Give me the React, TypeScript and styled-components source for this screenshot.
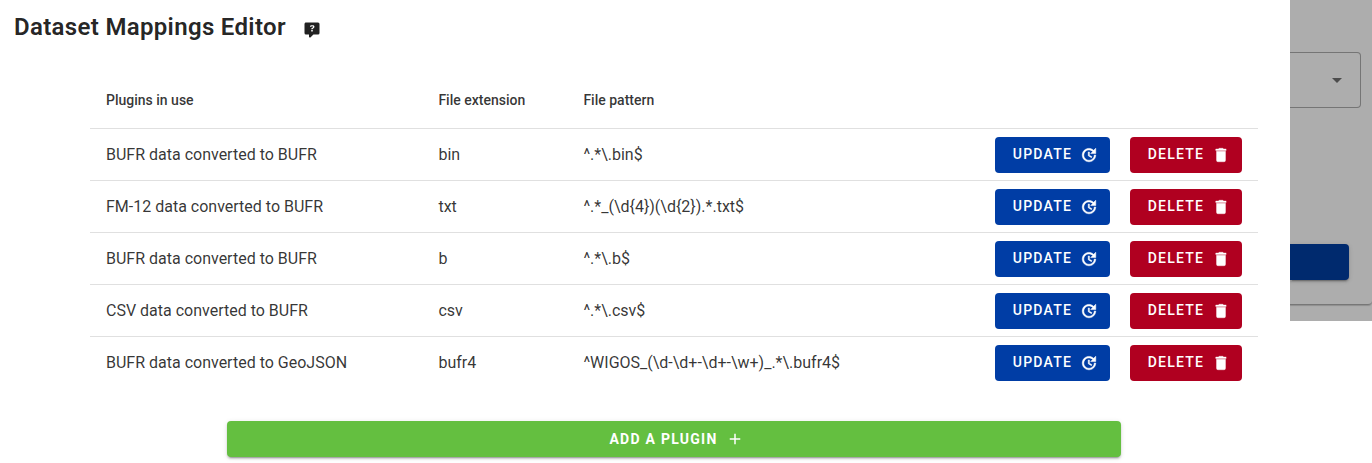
import React from "react";
import styled, { createGlobalStyle } from "styled-components";

const GlobalStyle = createGlobalStyle`
  *, *::before, *::after { box-sizing: border-box; }
  html, body { margin: 0; background: #fff; overflow: hidden; }
  body { font-family: Roboto, "Liberation Sans", sans-serif; color: rgba(0, 0, 0, 0.87); }
`;

const paths = {
  help: "M9,22A1,1 0 0,1 8,21V18H4A2,2 0 0,1 2,16V4C2,2.89 2.9,2 4,2H20A2,2 0 0,1 22,4V16A2,2 0 0,1 20,18H13.9L10.2,21.71C10,21.9 9.75,22 9.5,22H9M12.19,5.5C11.3,5.5 10.59,5.68 10.05,6.04C9.5,6.4 9.22,7 9.27,7.69H11.24C11.24,7.41 11.34,7.2 11.5,7.06C11.7,6.92 11.92,6.85 12.19,6.85C12.5,6.85 12.77,6.93 12.95,7.11C13.13,7.28 13.22,7.5 13.22,7.8C13.22,8.08 13.14,8.33 13,8.54C12.83,8.76 12.62,8.94 12.36,9.08C11.84,9.4 11.5,9.68 11.29,9.92C11.1,10.16 11,10.5 11,11H13C13,10.72 13.05,10.5 13.14,10.32C13.23,10.15 13.4,10 13.66,9.85C14.12,9.64 14.5,9.36 14.79,9C15.08,8.63 15.23,8.24 15.23,7.8C15.23,7.1 14.96,6.54 14.42,6.12C13.88,5.71 13.13,5.5 12.19,5.5M11,12V14H13V12H11Z",
  update: "M21,10.12H14.22L16.96,7.3C14.23,4.6 9.81,4.5 7.08,7.2C4.35,9.91 4.35,14.28 7.08,17C9.81,19.7 14.23,19.7 16.96,17C18.32,15.65 19,14.08 19,12.1H21C21,14.08 20.12,16.65 18.36,18.39C14.85,21.87 9.15,21.87 5.64,18.39C2.14,14.92 2.11,9.28 5.62,5.81C9.13,2.34 14.76,2.34 18.27,5.81L21,3V10.12M12.5,8V12.25L16,14.33L15.28,15.54L11,13V8H12.5Z",
  trash: "M19,4H15.5L14.5,3H9.5L8.5,4H5V6H19M6,19A2,2 0 0,0 8,21H16A2,2 0 0,0 18,19V7H6V19Z",
  plus: "M19,13H13V19H11V13H5V11H11V5H13V11H19V13Z",
  caret: "M7,10L12,15L17,10H7Z",
};

const Svg = styled.svg<{ $size: number; $stroke: number }>`
  display: block;
  flex: none;
  width: ${(p) => p.$size}px;
  height: ${(p) => p.$size}px;
  fill: currentColor;
  stroke: currentColor;
  stroke-width: ${(p) => p.$stroke};
`;

type IconProps = { name: keyof typeof paths; size?: number; stroke?: number };

const Icon = ({ name, size = 18, stroke = 0 }: IconProps) => (
  <Svg $size={size} $stroke={stroke} viewBox="0 0 24 24" aria-hidden="true">
    <path d={paths[name]} />
  </Svg>
);

const Page = styled.div`
  display: flex;
  align-items: flex-start;
  width: 1372px;
  height: 463px;
  overflow: hidden;
`;

const Dialog = styled.main`
  width: 1290px;
  height: 463px;
  flex: none;
  background: #fff;
`;

const TitleBar = styled.header`
  display: flex;
  align-items: center;
  gap: 17.5px;
  height: 54px;
  padding-left: 14px;
`;

const Title = styled.h1`
  margin: 0;
  font-size: 24px;
  line-height: 32px;
  font-weight: 600;
  letter-spacing: 0.33px;
`;

const HelpMark = styled.span`
  padding-top: 5px;
`;

const Table = styled.section`
  width: 1168px;
  margin: 18px 0 0 90px;
`;

const Row = styled.div`
  display: grid;
  grid-template-columns: 332.4px 145px 1fr auto;
  align-items: center;
  height: 52px;
  padding: 0 16px;
  border-bottom: 1px solid #e0e0e0;
  color: rgba(0, 0, 0, 0.8);
  font-size: 16px;
  font-weight: 400;

  &:last-child { border-bottom-color: transparent; }
`;

const HeadRow = styled(Row)`
  height: 57px;
  font-size: 14px;
  font-weight: 500;
`;

const Actions = styled.div`
  display: flex;
  gap: 20px;
`;

const Button = styled.button<{ $color: string; $width: number }>`
  display: flex;
  align-items: center;
  justify-content: center;
  gap: 8px;
  width: ${(p) => p.$width}px;
  height: 36px;
  padding: 0 0 0 6px;
  border: 0;
  border-radius: 4px;
  background: ${(p) => p.$color};
  color: #fff;
  font: 500 14px/20px Roboto, "Liberation Sans", sans-serif;
  letter-spacing: 1.25px;
  text-transform: uppercase;
`;

const Label = styled.span`
  padding-bottom: 1px;
`;

const AddButton = styled(Button)`
  margin: 32px 0 0 227px;
  padding-left: 5px;
  font-weight: 700;
  box-shadow: 0 3px 1px -2px rgba(0, 0, 0, 0.2), 0 2px 2px rgba(0, 0, 0, 0.14), 0 1px 5px rgba(0, 0, 0, 0.12);
`;

const Backdrop = styled.aside`
  flex: 1;
  height: 321px;
  padding-top: 52px;
  background: #adadad;
  overflow: hidden;
`;

const SelectField = styled.div`
  display: flex;
  align-items: center;
  justify-content: flex-end;
  width: 71px;
  height: 56px;
  padding-right: 11px;
  border: 1px solid #757575;
  border-left: 0;
  border-radius: 0 4px 4px 0;
  color: #4c4c4c;
`;

const SubmitBar = styled.div`
  width: 59px;
  height: 36px;
  margin-top: 136px;
  border-radius: 0 4px 4px 0;
  background: #002a6e;
  box-shadow: 0 3px 1px -2px rgba(0, 0, 0, 0.2), 0 2px 2px rgba(0, 0, 0, 0.14), 0 1px 5px rgba(0, 0, 0, 0.12);
`;

const CardEdge = styled.div`
  height: 25px;
  border-bottom: 1px solid #777;
  border-bottom-right-radius: 4px;
  box-shadow: 0 1px 1px rgba(0, 0, 0, 0.18);
`;

const plugins = [
  ["BUFR data converted to BUFR", "bin", "^.*\\.bin$"],
  ["FM-12 data converted to BUFR", "txt", "^.*_(\\d{4})(\\d{2}).*.txt$"],
  ["BUFR data converted to BUFR", "b", "^.*\\.b$"],
  ["CSV data converted to BUFR", "csv", "^.*\\.csv$"],
  ["BUFR data converted to GeoJSON", "bufr4", "^WIGOS_(\\d-\\d+-\\d+-\\w+)_.*\\.bufr4$"],
];

export default function App() {
  return (
    <Page>
      <GlobalStyle />
      <Dialog>
        <TitleBar>
          <Title>Dataset Mappings Editor</Title>
          <HelpMark><Icon name="help" /></HelpMark>
        </TitleBar>
        <Table>
          <HeadRow>
            <span>Plugins in use</span>
            <span>File extension</span>
            <span>File pattern</span>
          </HeadRow>
          {plugins.map(([name, extension, pattern]) => (
            <Row key={extension}>
              <span>{name}</span>
              <span>{extension}</span>
              <span>{pattern}</span>
              <Actions>
                <Button $color="#003da5" $width={115}>
                  <Label>Update</Label>
                  <Icon name="update" stroke={0.7} />
                </Button>
                <Button $color="#b00020" $width={112}>
                  <Label>Delete</Label>
                  <Icon name="trash" stroke={0.5} />
                </Button>
              </Actions>
            </Row>
          ))}
        </Table>
        <AddButton $color="#64bf40" $width={894}>
          Add a plugin
          <Icon name="plus" />
        </AddButton>
      </Dialog>
      <Backdrop>
        <SelectField><Icon name="caret" size={24} /></SelectField>
        <SubmitBar />
        <CardEdge />
      </Backdrop>
    </Page>
  );
}
